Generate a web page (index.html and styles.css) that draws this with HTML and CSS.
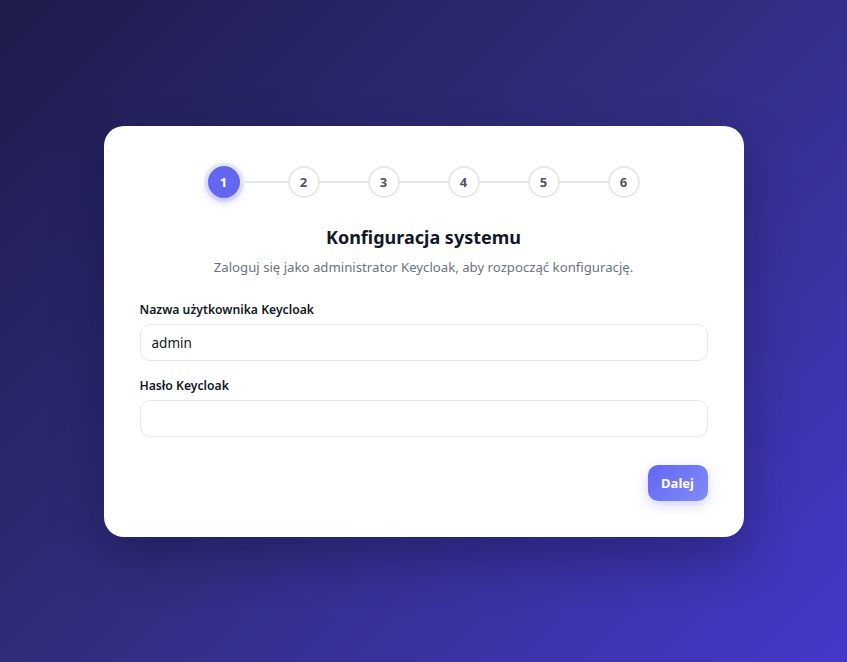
FILE: index.html
```html
<!DOCTYPE html>
<html lang="pl">
<head>
<meta charset="utf-8">
<title>Konfiguracja systemu</title>
<link rel="stylesheet" href="styles.css">
</head>
<body>
<main class="page">
  <section class="card">
    <ol class="stepper">
      <li class="step active">1</li>
      <li class="line"></li>
      <li class="step">2</li>
      <li class="line"></li>
      <li class="step">3</li>
      <li class="line"></li>
      <li class="step">4</li>
      <li class="line"></li>
      <li class="step">5</li>
      <li class="line"></li>
      <li class="step">6</li>
    </ol>
    <h1 class="title">Konfiguracja systemu</h1>
    <p class="subtitle">Zaloguj się jako administrator Keycloak, aby rozpocząć konfigurację.</p>
    <form class="form">
      <label class="field">
        <span class="label">Nazwa użytkownika Keycloak</span>
        <input class="input" type="text" value="admin">
      </label>
      <label class="field">
        <span class="label">Hasło Keycloak</span>
        <input class="input" type="password">
      </label>
      <div class="actions">
        <button class="btn" type="button">Dalej</button>
      </div>
    </form>
  </section>
</main>
</body>
</html>
```
FILE: styles.css
```css
* { box-sizing: border-box; }
html, body { margin: 0; height: 100%; }
body {
  font-family: "Noto Sans", "Open Sans", sans-serif;
  background: linear-gradient(135deg, #1e1b4b 0%, #312e81 50%, #4338ca 100%);
  color: #111827;
}
.page {
  min-height: 100vh;
  display: flex;
  align-items: center;
  justify-content: center;
  padding-top: 1px;
}
.card {
  width: 640px;
  background: #fff;
  border-radius: 20px;
  padding: 40px 36px 36px;
  box-shadow: 0 20px 50px rgba(10, 8, 40, 0.35);
}
.stepper {
  list-style: none;
  margin: 0 auto;
  padding: 0;
  display: flex;
  align-items: center;
  justify-content: center;
}
.step {
  width: 32px;
  height: 32px;
  border-radius: 50%;
  border: 2px solid #e5e7eb;
  background: #fff;
  color: #4b5563;
  font-size: 13px;
  font-weight: 700;
  display: flex;
  align-items: center;
  justify-content: center;
}
.step.active {
  background: #6366f1;
  border-color: #6366f1;
  color: #fff;
  box-shadow: 0 0 0 4px rgba(99, 102, 241, 0.12), 0 4px 10px rgba(99, 102, 241, 0.35);
}
.line {
  width: 48px;
  height: 2px;
  background: #e5e7eb;
}
.title {
  margin: 26px 0 0;
  text-align: center;
  font-size: 18px;
  font-weight: 700;
  line-height: 26px;
  color: #111827;
}
.subtitle {
  margin: 7px 0 0;
  text-align: center;
  font-size: 13.2px;
  line-height: 20px;
  color: #6b7280;
}
.form {
  margin-top: 24px;
  display: flex;
  flex-direction: column;
  gap: 16px;
}
.field {
  display: flex;
  flex-direction: column;
  gap: 5px;
}
.label {
  font-size: 12.2px;
  font-weight: 600;
  line-height: 18px;
  color: #111827;
}
.input {
  height: 37px;
  border: 1px solid #e5e7eb;
  border-radius: 10px;
  padding: 0 11px;
  font-family: inherit;
  font-size: 13.5px;
  color: #111827;
  background: #fff;
  outline: none;
}
.actions {
  display: flex;
  justify-content: flex-end;
  margin-top: 12px;
}
.btn {
  width: 60px;
  height: 36px;
  border: none;
  border-radius: 10px;
  background: linear-gradient(135deg, #6366f1, #818cf8);
  color: #fff;
  font-family: inherit;
  font-size: 13px;
  font-weight: 700;
  box-shadow: 0 4px 12px rgba(99, 102, 241, 0.3);
}
```
